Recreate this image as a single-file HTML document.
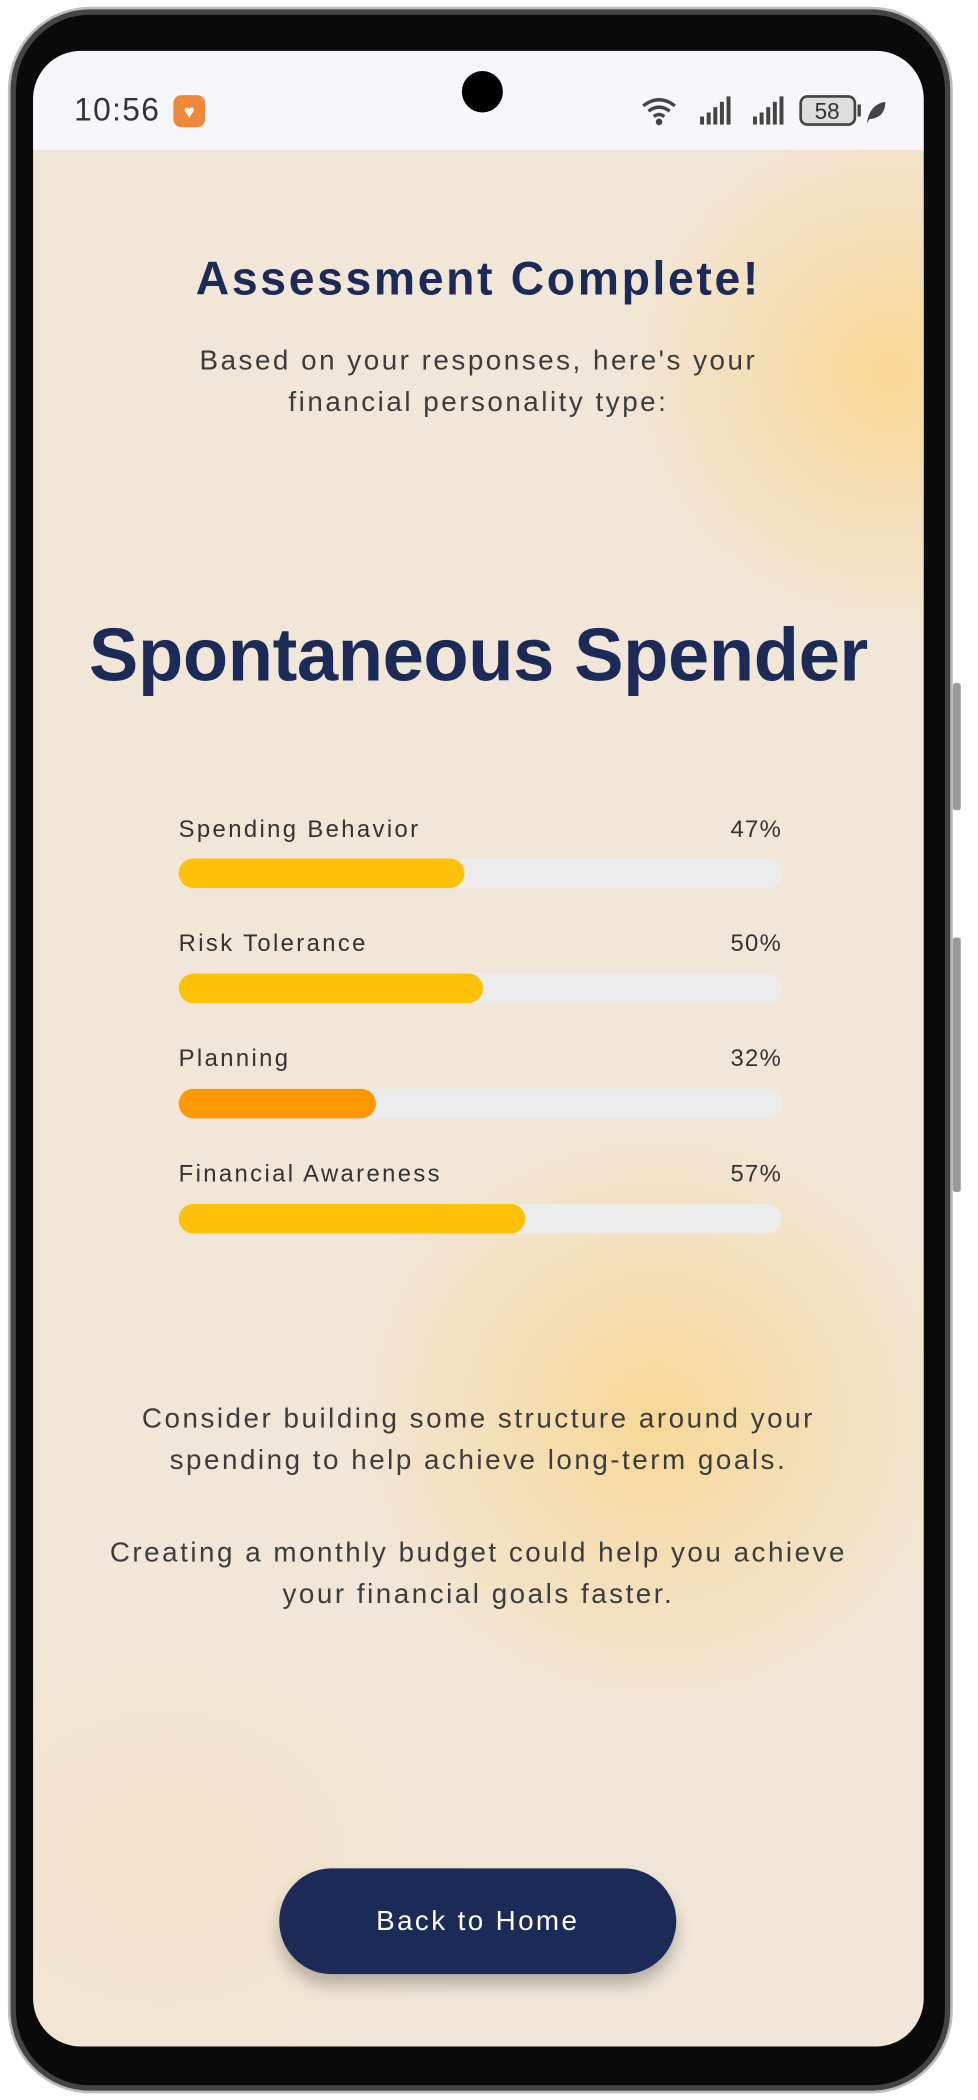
<!DOCTYPE html>
<html><head><meta charset="utf-8"><style>
html,body{margin:0;padding:0;background:#fff;width:978px;height:2100px;overflow:hidden}
#w{position:absolute;left:0;top:0;width:739px;height:1568px;transform:scale(1.3234,1.3393);transform-origin:0 0;font-family:"Liberation Sans",sans-serif}
.phone{position:absolute;left:6px;top:5px;width:714px;height:1558px;border-radius:62px;background:#0a0a0a;border:2px solid #bdbdbd;box-sizing:border-box;box-shadow:inset 0 0 0 4px #444}
.btnside{position:absolute;background:#9a9a9a;width:6px;border-radius:2px;left:720px}
.screen{position:absolute;left:25px;top:38px;width:673px;height:1490px;border-radius:36px;overflow:hidden;background:#f1e6d8}
.glow1{position:absolute;left:440px;top:40px;width:420px;height:400px;border-radius:50%;background:radial-gradient(closest-side,rgba(248,214,140,.9),rgba(248,214,140,0))}
.glow2{position:absolute;left:230px;top:790px;width:480px;height:460px;border-radius:50%;background:radial-gradient(closest-side,rgba(248,214,140,.85),rgba(248,214,140,0))}
.glow3{position:absolute;left:-150px;top:1150px;width:500px;height:400px;border-radius:50%;background:radial-gradient(closest-side,rgba(243,226,200,.8),rgba(243,226,200,0))}
.status{position:absolute;left:0;top:0;width:673px;height:74px;background:#f7f7fb}
.time{position:absolute;left:31px;top:31px;font-size:24px;color:#333;letter-spacing:1px}
.app{position:absolute;left:106px;top:33px;width:24px;height:24px;border-radius:6px;background:#f0883a;color:#fff;font-size:14px;text-align:center;line-height:24px}
.cam{position:absolute;left:324px;top:15px;width:31px;height:31px;border-radius:50%;background:#000}
.c{position:absolute;left:0;width:673px;text-align:center}
.h1{top:151px;font-size:35px;font-weight:bold;color:#1b2a57;letter-spacing:2px}
.sub{font-size:21px;color:#3c3c3c;line-height:31px;letter-spacing:1.9px}
.big{top:418px;font-size:56px;font-weight:bold;color:#1b2a57;letter-spacing:-0.3px}
.lab{position:absolute;left:110px;width:452px;font-size:18px;color:#333;letter-spacing:1.8px}
.lab span{float:right;letter-spacing:1px}
.track{position:absolute;left:110px;width:452px;height:22px;border-radius:11px;background:#ececec}
.fill{height:22px;border-radius:11px;background:#ffc107}
.btn{position:absolute;left:186px;top:1357px;width:300px;height:79px;border-radius:40px;background:#1b2a57;color:#fff;font-size:21px;text-align:center;line-height:79px;letter-spacing:1.8px;box-shadow:0 8px 12px rgba(0,0,0,.25)}
</style></head><body><div id="w">
<div class="phone"></div>
<div class="btnside" style="top:510px;height:95px"></div>
<div class="btnside" style="top:700px;height:190px"></div>
<div class="screen">
<div class="glow1"></div><div class="glow2"></div><div class="glow3"></div>
<div class="status">
<div class="time">10:56</div><div class="app">♥</div>
<div class="cam"></div>
<svg style="position:absolute;left:458px;top:32px" width="200" height="26" viewBox="0 0 200 26">
<path d="M3 9 Q15 0 27 9 M7 13 Q15 7 23 13 M11 17 Q15 14 19 17" stroke="#444" stroke-width="2.5" fill="none"/><circle cx="15" cy="21" r="2.5" fill="#444"/>
<g fill="#444"><rect x="46" y="17" width="3" height="6"/><rect x="51" y="14" width="3" height="9"/><rect x="56" y="10" width="3" height="13"/><rect x="61" y="6" width="3" height="17"/><rect x="66" y="2" width="3" height="21"/>
<rect x="86" y="17" width="3" height="6"/><rect x="91" y="14" width="3" height="9"/><rect x="96" y="10" width="3" height="13"/><rect x="101" y="6" width="3" height="17"/><rect x="106" y="2" width="3" height="21"/></g>
<rect x="122" y="2" width="41" height="21" rx="5" fill="#ddd" stroke="#444" stroke-width="2"/>
<text x="142" y="19" font-size="17" text-anchor="middle" fill="#333" font-family="Liberation Sans">58</text>
<rect x="165" y="8" width="2.5" height="9" fill="#444"/>
<path d="M172 22 Q174 8 186 6 Q186 18 174 19" fill="#444"/>
</svg>
</div>
<div class="c h1">Assessment Complete!</div>
<div class="c sub" style="top:216px">Based on your responses, here's your<br>financial personality type:</div>
<div class="c big">Spontaneous Spender</div>
<div class="lab" style="top:571px;width:456px">Spending Behavior<span>47%</span></div>
<div class="track" style="top:603px;width:456px"><div class="fill" style="width:216px"></div></div>
<div class="lab" style="top:656px;width:456px">Risk Tolerance<span>50%</span></div>
<div class="track" style="top:689px;width:456px"><div class="fill" style="width:230px"></div></div>
<div class="lab" style="top:742px;width:456px">Planning<span>32%</span></div>
<div class="track" style="top:775px;width:456px"><div class="fill" style="width:149px;background:#ff9800"></div></div>
<div class="lab" style="top:828px;width:456px">Financial Awareness<span>57%</span></div>
<div class="track" style="top:861px;width:456px"><div class="fill" style="width:262px"></div></div>
<div class="c sub" style="top:1006px">Consider building some structure around your<br>spending to help achieve long-term goals.</div>
<div class="c sub" style="top:1106px">Creating a monthly budget could help you achieve<br>your financial goals faster.</div>
<div class="btn">Back to Home</div>
</div>
</div></body></html>
